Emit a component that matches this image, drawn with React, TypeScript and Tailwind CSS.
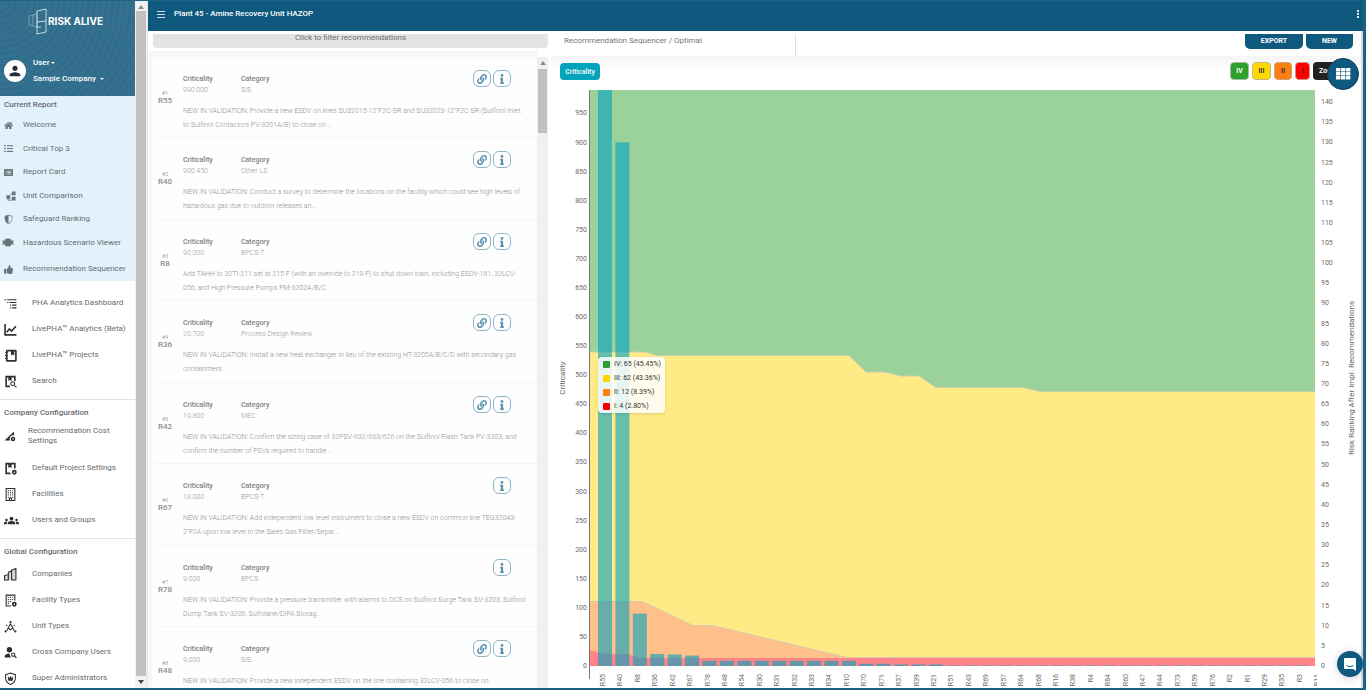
import type { ReactNode } from 'react';
import { BsShieldShaded } from 'react-icons/bs';
import { FaHome, FaInfo, FaLink, FaListUl, FaThumbsUp } from 'react-icons/fa';
import { FaRectangleList } from 'react-icons/fa6';
import { MdGroups, MdPerson } from 'react-icons/md';

type NavItem = { label: string; icon: ReactNode };

type Recommendation = {
  id: string;
  criticality: string;
  category: string;
  text: string;
  linked: boolean;
};

function LineIcon({ children }: { children: ReactNode }) {
  return (
    <svg
      viewBox="0 0 24 24"
      className="h-[13px] w-[13px]"
      fill="none"
      stroke="currentColor"
      strokeWidth="2"
    >
      {children}
    </svg>
  );
}

const reportItems: NavItem[] = [
  { label: 'Welcome', icon: <FaHome /> },
  { label: 'Critical Top 3', icon: <FaListUl /> },
  { label: 'Report Card', icon: <FaRectangleList /> },
  {
    label: 'Unit Comparison',
    icon: (
      <svg viewBox="0 0 24 24" className="ml-0.5 h-[10px] w-[10px]" fill="currentColor">
        <rect x="1" y="10" width="9" height="9" rx="1" />
        <rect x="14" y="1" width="9" height="9" rx="1" />
        <rect x="14" y="14" width="9" height="9" rx="1" />
        <path d="M5 18v4h9M9 11l5-5" fill="none" stroke="currentColor" strokeWidth="2" />
      </svg>
    ),
  },
  { label: 'Safeguard Ranking', icon: <BsShieldShaded /> },
  {
    label: 'Hazardous Scenario Viewer',
    icon: (
      <svg viewBox="0 0 24 18" className="-ml-0.5 h-[9px] w-[12px]" fill="currentColor">
        <ellipse cx="12" cy="9" rx="8" ry="8" />
        <path d="M0 4l6 3v4l-6 3 2-5zM24 4l-6 3v4l6 3-2-5z" />
      </svg>
    ),
  },
  { label: 'Recommendation Sequencer', icon: <FaThumbsUp /> },
];

const analyticsItems: NavItem[] = [
  {
    label: 'PHA Analytics Dashboard',
    icon: (
      <LineIcon>
        <path d="M1 5h3M6 5h17M6 10h2M10 10h13M11 15h2M15 15h8M11 20h2M15 20h8" />
      </LineIcon>
    ),
  },
  {
    label: 'LivePHA™ Analytics (Beta)',
    icon: (
      <LineIcon>
        <path d="M2 2v20h21M5 17l5-6 4 4 8-9" strokeWidth="3" />
      </LineIcon>
    ),
  },
  {
    label: 'LivePHA™ Projects',
    icon: (
      <LineIcon>
        <rect x="5" y="3" width="17" height="19" rx="1" strokeWidth="3" />
        <path d="M2 7h5M2 12h5M2 17h5" />
        <path d="M13 3h6v9l-3-2-3 2z" fill="currentColor" stroke="none" />
      </LineIcon>
    ),
  },
  {
    label: 'Search',
    icon: (
      <LineIcon>
        <path d="M11 21H4V3h16v8" strokeWidth="3" />
        <path d="M8 3h6v8l-3-2-3 2z" fill="currentColor" stroke="none" />
        <circle cx="16" cy="16" r="3.5" />
        <path d="M19 19l4 4" />
      </LineIcon>
    ),
  },
];

const companyItems: NavItem[] = [
  {
    label: 'Default Project Settings',
    icon: (
      <LineIcon>
        <path d="M12 21H4V3h16v9" strokeWidth="3" />
        <path d="M8 3h6v8l-3-2-3 2z" fill="currentColor" stroke="none" />
        <circle cx="19" cy="19" r="3" strokeWidth="3" />
      </LineIcon>
    ),
  },
  {
    label: 'Facilities',
    icon: (
      <LineIcon>
        <path d="M4 1h16v22H4zM10 23v-4h4v4" />
        <path d="M7 5h10M7 9h10M7 13h10M7 17h10" strokeDasharray="2 2" />
      </LineIcon>
    ),
  },
  { label: 'Users and Groups', icon: <MdGroups className="h-[15px] w-[15px]" /> },
];

const globalItems: NavItem[] = [
  {
    label: 'Companies',
    icon: (
      <LineIcon>
        <path d="M1 22V14l7-2v10zM8 22V8l6-3v17M14 22V4l8-3v21z" fill="#d5d8db" />
      </LineIcon>
    ),
  },
  {
    label: 'Facility Types',
    icon: (
      <LineIcon>
        <path d="M13 22H4V2h16v10" />
        <path d="M7 6h10M7 10h10M7 14h6M7 18h4" strokeDasharray="2 2" />
        <circle cx="19" cy="19" r="3" strokeWidth="3" />
      </LineIcon>
    ),
  },
  {
    label: 'Unit Types',
    icon: (
      <LineIcon>
        <path d="M12 7L5 20M12 7l7 13M8 15l4 3 4-3M4 9l2 2M20 9l-2 2" />
        <circle cx="12" cy="4" r="2" fill="currentColor" stroke="none" />
        <circle cx="3" cy="21" r="2" fill="currentColor" stroke="none" />
        <circle cx="21" cy="21" r="2" fill="currentColor" stroke="none" />
      </LineIcon>
    ),
  },
  {
    label: 'Cross Company Users',
    icon: (
      <LineIcon>
        <circle cx="10" cy="7" r="5" fill="currentColor" stroke="none" />
        <path d="M1 21c0-5 4-7 9-7 1 3 1 5 3 7z" fill="currentColor" stroke="none" />
        <circle cx="17" cy="16" r="3" />
        <path d="M19 18l4 4" />
      </LineIcon>
    ),
  },
  {
    label: 'Super Administrators',
    icon: (
      <LineIcon>
        <path d="M12 2l9 3v6c0 6-4 10-9 12-5-2-9-6-9-12V5z" />
        <path d="M7 8l3 3 2-4 2 4 3-3-1 8H8z" fill="currentColor" stroke="none" />
      </LineIcon>
    ),
  },
];

const recommendations: Recommendation[] = [
  {
    id: 'R55',
    criticality: '990.000',
    category: 'SIS',
    text: 'NEW IN VALIDATION: Provide a new ESDV on lines SU32015-12"F2C-SR and SU32023-12"F2C-SR (Sulfinol Inlet\nto Sulfinol Contactors PV-3201A/B) to close on ...',
    linked: true,
  },
  {
    id: 'R40',
    criticality: '900.450',
    category: 'Other LS',
    text: 'NEW IN VALIDATION: Conduct a survey to determine the locations on the facility which could see high levels of\nhazardous gas due to outdoor releases an...',
    linked: true,
  },
  {
    id: 'R8',
    criticality: '90.000',
    category: 'BPCS-T',
    text: 'Add TAHH to 32TI-211 set at 215 F (with an override to 219 F) to shut down train, including ESDV-161, 32LCV-\n056, and High Pressure Pumps PM-3202A/B/C.',
    linked: true,
  },
  {
    id: 'R36',
    criticality: '20.700',
    category: 'Process Design Review',
    text: 'NEW IN VALIDATION: Install a new heat exchanger in lieu of the existing HT-3205A/B/C/D with secondary gas\ncontainment.',
    linked: true,
  },
  {
    id: 'R42',
    criticality: '19.800',
    category: 'MEC',
    text: 'NEW IN VALIDATION: Confirm the sizing case of 32PSV-632/633/626 on the Sulfinol Flash Tank PV-3203, and\nconfirm the number of PSVs required to handle ...',
    linked: true,
  },
  {
    id: 'R67',
    criticality: '18.000',
    category: 'BPCS-T',
    text: 'NEW IN VALIDATION: Add independent low level instrument to close a new ESDV on common line TEG32043-\n2"F2A upon low level in the Sales Gas Filter/Separ...',
    linked: false,
  },
  {
    id: 'R78',
    criticality: '9.000',
    category: 'BPCS',
    text: 'NEW IN VALIDATION: Provide a pressure transmitter with alarms to DCS on Sulfinol Surge Tank SV-3203, Sulfinol\nDump Tank SV-3206, Sulfolane/DIPA Storag...',
    linked: false,
  },
  {
    id: 'R48',
    criticality: '9.000',
    category: 'SIS',
    text: 'NEW IN VALIDATION: Provide a new independent ESDV on the line containing 32LCV-056 to close on',
    linked: true,
  },
];

const chartLabels = [
  'R55', 'R40', 'R8', 'R36', 'R42', 'R67', 'R78', 'R48', 'R54', 'R30', 'R31', 'R32', 'R33', 'R34',
  'R10', 'R70', 'R71', 'R37', 'R39', 'R21', 'R51', 'R43', 'R69', 'R57', 'R64', 'R68', 'R16', 'R38',
  'R4', 'R84', 'R60', 'R47', 'R44', 'R73', 'R59', 'R76', 'R2', 'R1', 'R29', 'R35', 'R3', 'R11',
];

const chartValues = [
  990, 900.45, 90, 20.7, 19.8, 18, 9, 9, 9, 9, 9, 9, 9, 9, 9, 4, 4, 2.7, 2.7, 2.7, 1, 1, 1, 1, 1, 1,
  1, 1, 1, 1, 1, 1, 1, 1, 1, 1, 1, 1, 1, 1, 1,
];

const legend = [
  { label: 'IV: 65 (45.45%)', dot: 'bg-[#2ca02c]' },
  { label: 'III: 62 (43.36%)', dot: 'bg-[#ffd500]' },
  { label: 'II: 12 (8.39%)', dot: 'bg-[#ff7f0e]' },
  { label: 'I: 4 (2.80%)', dot: 'bg-[#f50000]' },
];

function NavRow({ item }: { item: NavItem }) {
  return (
    <li className="h-[26px]">
      <a href="#" className="flex h-full items-center pl-1">
        <span className="flex w-7 shrink-0 text-[#2b3035]">{item.icon}</span>
        <span className="whitespace-nowrap">{item.label}</span>
      </a>
    </li>
  );
}

function Logo() {
  return (
    <div className="flex items-center justify-center pr-1 pt-[6px]">
      <svg viewBox="0 0 22 28" className="-mr-0.5 h-7 w-[22px] shrink-0" fill="none" stroke="#fff">
        <path d="M9 4l9-2v12l-9 1zM9 15v12l9-2V14M9 20h4" strokeWidth="0.8" opacity="0.9" />
        <path d="M1 9l8-2M1 9v9l8 2M5 8v11M9 7v13" strokeWidth="1" opacity="0.3" />
      </svg>
      <span className="font-['Inter'] text-[10px] leading-3 font-bold whitespace-nowrap text-white">
        RISK ALIVE
      </span>
    </div>
  );
}

function Arrow({ down = false }: { down?: boolean }) {
  return (
    <svg viewBox="0 0 8 8" className="h-2 w-2 shrink-0" fill={down ? '#444' : '#8a8a8a'}>
      <path d={down ? 'M1 2h6L4 6z' : 'M1 6h6L4 2z'} />
    </svg>
  );
}

function Sidebar() {
  return (
    <aside className="w-[135px] shrink-0 overflow-hidden bg-white text-[8px] leading-[10px] text-[#666b70]">
      <div className="h-[95px] bg-[repeating-radial-gradient(circle_at_0_0,#34718f_0px,#34718f_3px,#2f6a89_4px,#34718f_6px)]">
        <Logo />
        <div className="flex items-center gap-[7px] pl-1 pt-[23px] text-white">
          <span className="flex h-[22px] w-[22px] items-center justify-center rounded-full bg-white text-[#222d38]">
            <MdPerson className="h-4 w-4" />
          </span>
          <div className="flex flex-col items-start gap-1.5 font-medium">
            <button type="button" className="flex items-center gap-0.5">
              User <span className="border-x-2 border-t-2 border-x-transparent border-t-white" />
            </button>
            <button type="button" className="flex items-center gap-1">
              Sample Company
              <span className="border-x-2 border-t-2 border-x-transparent border-t-white" />
            </button>
          </div>
        </div>
      </div>

      <nav className="bg-[#e2f2fc]">
        <h2 className="flex h-[17px] items-center pl-1 font-medium">Current Report</h2>
        <ul>
          {reportItems.map((item) => (
            <li key={item.label} className="odd:h-6 even:h-[23px] last:pt-[3px] last:box-content">
              <a href="#" className="flex h-full items-center pl-1">
                <span className="flex w-[19px] shrink-0 text-[9px] text-[#6b7278]">{item.icon}</span>
                <span className="whitespace-nowrap">{item.label}</span>
              </a>
            </li>
          ))}
        </ul>
      </nav>

      <ul className="border-b border-[#e4e4e4] pt-[9px] pb-[5px]">
        {analyticsItems.map((item) => (
          <NavRow key={item.label} item={item} />
        ))}
      </ul>

      <section className="border-b border-[#e4e4e4] pb-[5px]">
        <h2 className="flex h-[22px] items-center pt-[3px] pl-1 font-medium">Company Configuration</h2>
        <ul>
          <li className="mb-[5px] h-7">
            <a href="#" className="flex h-full items-center pl-1">
              <span className="flex w-6 shrink-0 text-[#2b3035]">
                <svg viewBox="0 0 24 24" className="h-3 w-3" fill="currentColor">
                  <path d="M1 21L20 3v8a7 7 0 0 0-8 10z" />
                  <circle cx="18" cy="18" r="3" fill="none" stroke="currentColor" strokeWidth="3" />
                </svg>
              </span>
              <span>Recommendation Cost Settings</span>
            </a>
          </li>
          {companyItems.map((item) => (
            <NavRow key={item.label} item={item} />
          ))}
        </ul>
      </section>

      <section>
        <h2 className="flex h-[22px] items-center pt-[3px] pl-1 font-medium">Global Configuration</h2>
        <ul>
          {globalItems.map((item) => (
            <NavRow key={item.label} item={item} />
          ))}
        </ul>
      </section>
    </aside>
  );
}

function RecommendationRow({ rec, index }: { rec: Recommendation; index: number }) {
  return (
    <li className="flex shrink-0 gap-2 border-b border-[#f5f5f5] pt-[17px] odd:h-[81px] even:h-[82px]">
      <div className="w-5 shrink-0 pt-4 text-center">
        <div className="text-[5px] leading-[6px] text-[#a0a0a0]">#{index + 1}</div>
        <div className="text-[8px] leading-[9px] font-medium text-[#8c8c8c]">{rec.id}</div>
      </div>
      <div className="min-w-0 flex-1 text-[7px] leading-[11px] text-[#999]">
        <div className="flex">
          <dl className="w-[58px]">
            <dt className="font-medium text-[#808080]">Criticality</dt>
            <dd className="font-light">{rec.criticality}</dd>
          </dl>
          <dl className="flex-1">
            <dt className="font-medium text-[#808080]">Category</dt>
            <dd className="font-light">{rec.category}</dd>
          </dl>
          <div className="-mt-1 mr-[26px] flex gap-0.5 text-[#5a93b0]">
            {rec.linked && (
              <button
                type="button"
                aria-label="Linked scenarios"
                className="flex h-[17px] w-[18px] items-center justify-center rounded-[6px] border border-[#8fb5c9]"
              >
                <FaLink className="h-[10px] w-[10px]" />
              </button>
            )}
            <button
              type="button"
              aria-label="Details"
              className="flex h-[17px] w-[18px] items-center justify-center rounded-[6px] border border-[#8fb5c9]"
            >
              <FaInfo className="h-[10px] w-[10px]" />
            </button>
          </div>
        </div>
        <p className="mt-2 text-[7px] leading-[14px] font-light whitespace-pre text-[#8e8e8e]">{rec.text}</p>
      </div>
    </li>
  );
}

function RecommendationList() {
  return (
    <section className="flex w-[403px] shrink-0 flex-col">
      <div className="bg-white py-[3px] pr-[3px] pl-[5px]">
        <button
          type="button"
          className="flex h-[14px] w-full justify-center rounded-b bg-[#e3e3e3] text-[8px] leading-[8px] text-[#6c6c6c]"
        >
          Click to filter recommendations
        </button>
      </div>
      <div className="flex min-h-0 flex-1 border-l-4 border-[#f7f7f7] bg-[#fefefe] pr-[3px]">
        <div className="min-w-0 flex-1 overflow-hidden bg-[linear-gradient(#f3f3f3,#fefefe_10px)]">
          <ul className="flex flex-col pt-1.5 pl-[3px]">
            {recommendations.map((rec, i) => (
              <RecommendationRow key={rec.id} rec={rec} index={i} />
            ))}
          </ul>
        </div>
        <div className="mt-[6px] flex w-[11px] flex-col items-center bg-[#f0f0f0] pt-0.5">
          <Arrow />
          <div className="mt-0.5 h-16 w-[9px] bg-[#c1c1c1]" />
        </div>
      </div>
    </section>
  );
}

function SequencerChart() {
  // left and bottom edges of the plot, and its scales
  const left = 38;
  const right = 764;
  const bottom = 582;
  const step = 17.42;
  const critY = (v: number) => bottom - v * 0.5816;
  const rankY = (v: number) => bottom - v * 4.028;

  return (
    <svg viewBox="0 0 810 604" className="block w-full font-['Roboto']">
      <defs>
        {/* the last tick label runs past the plot and is cut off */}
        <clipPath id="tick-clip">
          <rect x="0" y="0" width="766" height="604" />
        </clipPath>
      </defs>

      <rect x={left} y="6" width={right - left} height={bottom - 6} fill="#9bd299" />
      <path
        d={`M${left} 268H94L106 271.5H298L315 288H333L350 292H368L385 303.5H472L489 307.5H${right}V${bottom}H${left}Z`}
        fill="#ffea85"
      />
      <path
        d={`M${left} 268H94L106 271.5H298L315 288H333L350 292H368L385 303.5H472L489 307.5H${right}`}
        fill="none"
        stroke="#c9cfae"
      />
      <path d={`M${left} 517.5H91L142 541.5H161L296 573.5H${right}V${bottom}H${left}Z`} fill="#ffc089" />
      <path d={`M${left} 517.5H91L142 541.5H161L296 573.5H${right}`} fill="none" stroke="#d8c8b0" />
      <path d={`M${left} 566L54 570H76L90 574H${right}V${bottom}H${left}Z`} fill="#ff8487" />

      {chartValues.map((value, i) => (
        <rect
          key={i}
          x={47 + i * step}
          y={critY(value)}
          width="14"
          height={value * 0.5816}
          fill="#02a2c1"
          fillOpacity="0.6"
        />
      ))}

      <path d={`M${left + 0.5} 6V595`} stroke="#777" />

      {Array.from({ length: 20 }, (_, i) => i * 50).map((v) => (
        <text key={v} x="36" y={critY(v) + 2} textAnchor="end" fontSize="7" fill="#6a6a6a">
          {v}
        </text>
      ))}
      {Array.from({ length: 29 }, (_, i) => i * 5).map((v) => (
        <text key={v} x="770" y={rankY(v) + 2} fontSize="7" fill="#6a6a6a">
          {v}
        </text>
      ))}
      <g clipPath="url(#tick-clip)">
        {chartLabels.map((label, i) => (
          <text
            key={label}
            transform={`translate(${54 + i * step}, 590) rotate(-90)`}
            textAnchor="end"
            fontSize="7"
            fill="#6a6a6a"
          >
            {label}
          </text>
        ))}
      </g>

      <text transform="translate(14, 294) rotate(-90)" textAnchor="middle" fontSize="8" fill="#666">
        Criticality
      </text>
      <text transform="translate(803, 294) rotate(-90)" textAnchor="middle" fontSize="8" fill="#666">
        Risk Ranking After Impl. Recommendations
      </text>
    </svg>
  );
}

function SequencerPanel() {
  return (
    <section className="flex min-w-0 flex-1 flex-col border-r-2 border-[#dcdcdc] bg-white">
      <div className="flex h-[25px] shrink-0 justify-between pt-[3px] pr-2 pl-[13px]">
        <div className="w-[232px] border-r border-[#dedede] pt-0.5 text-[8px] leading-[10px] text-[#757575]">
          Recommendation Sequencer / Optimal
        </div>
        <div className="flex h-[15px] gap-[3px] text-[7px] leading-[12px] font-bold text-white">
          <button type="button" className="flex w-[58px] justify-center rounded-b-[5px] bg-[#0f587e] pt-px">
            EXPORT
          </button>
          <button type="button" className="flex w-[47px] justify-center rounded-b-[5px] bg-[#0f587e] pt-px">
            NEW
          </button>
        </div>
      </div>

      <div className="flex h-[28px] shrink-0 items-start justify-between bg-[linear-gradient(#f5f5f5,#fff_14px)] pt-1.5 pr-3 pl-[9px]">
        <button
          type="button"
          className="mt-px h-[17px] w-10 rounded-[4px] bg-[#05a3bc] text-[7px] leading-[10px] font-medium text-white"
        >
          Criticality
        </button>
        <div className="flex gap-[3px] text-[7px] leading-[10px] font-bold text-[#333]">
          <button type="button" className="h-[18px] w-[19px] rounded-[4px] border border-[#a9b8a0] bg-[#2ca02c] text-white">
            IV
          </button>
          <button type="button" className="h-[18px] w-[19px] rounded-[4px] border border-[#c5b880] bg-[#ffd800]">
            III
          </button>
          <button type="button" className="h-[18px] w-[18px] rounded-[4px] border border-[#c9a27e] bg-[#ff7f0e]">
            II
          </button>
          <button type="button" className="h-[18px] w-[15px] rounded-[4px] border border-[#d09090] bg-[#ff0000]">
            I
          </button>
          <button type="button" className="h-[18px] w-9 rounded-[4px] bg-[#222] pl-1.5 text-left text-white">
            Zoom
          </button>
        </div>
      </div>

      <div className="relative">
        <SequencerChart />
        <ul className="absolute top-[273px] left-[47px] flex flex-col gap-1 rounded-[4px] bg-white/85 py-0.5 pr-1 pl-[5px] text-[7px] leading-[10px] text-[#333] shadow">
          {legend.map((item) => (
            <li key={item.label} className="flex items-center gap-1">
              <span className={`h-[7px] w-[7px] rounded-[1px] ${item.dot}`} />
              {item.label}
            </li>
          ))}
        </ul>
      </div>
    </section>
  );
}

export default function App() {
  return (
    <div className="relative flex h-screen overflow-hidden border-t border-r-[3px] border-b-2 border-[#1b6287] bg-white font-['Roboto',sans-serif]">
      <Sidebar />
      <div className="flex w-[13px] shrink-0 flex-col items-center justify-between border-r border-[#e6e6e6] bg-[#f1f1f1] py-0.5">
        <Arrow />
        <div className="mb-0.5 w-[10px] flex-1 bg-[#c1c1c1]" />
        <Arrow down />
      </div>

      <main className="flex min-w-0 flex-1 flex-col">
        <header className="flex h-[30px] shrink-0 items-center bg-[#0f587e] pr-0.5 pb-1 pl-2 text-white">
          <button type="button" aria-label="Menu" className="mr-2">
            <svg viewBox="0 0 10 10" className="h-[10px] w-[10px]" stroke="#fff">
              <path d="M1 2.5h8M1 5.5h8M1 8.5h8" strokeWidth="0.8" />
            </svg>
          </button>
          <h1 className="flex-1 text-[8px] leading-[10px] font-medium">Plant 45 - Amine Recovery Unit HAZOP</h1>
          <button type="button" aria-label="More options">
            <svg viewBox="0 0 6 10" className="h-[10px] w-[6px]" fill="#dfe9ee">
              <path d="M2 1h2v2H2zM2 4h2v2H2zM2 7h2v2H2z" />
            </svg>
          </button>
        </header>
        <div className="flex min-h-0 flex-1">
          <RecommendationList />
          <SequencerPanel />
        </div>
      </main>

      <button
        type="button"
        aria-label="Apps"
        className="absolute top-[57px] right-1 flex h-8 w-8 items-center justify-center rounded-full border border-[#163a50] bg-[#0f587e] text-white"
      >
        <svg viewBox="0 0 15 12" className="h-3 w-[15px]" fill="currentColor">
          {[0, 5, 10].map((x) =>
            [0, 4, 8].map((y) => <rect key={`${x}-${y}`} x={x} y={y} width="4.4" height="3.4" rx="0.5" />)
          )}
        </svg>
      </button>
      <button
        type="button"
        aria-label="Open chat"
        className="absolute right-0 bottom-[11px] flex h-[26px] w-[26px] items-center justify-center rounded-full bg-[#0f587e] shadow-[0_1px_8px_rgba(0,0,0,0.2)]"
      >
        <svg viewBox="0 0 14 15" className="h-[15px] w-[14px]">
          <path d="M2 1h10a1 1 0 0 1 1 1v12l-3-2H2a1 1 0 0 1-1-1V2a1 1 0 0 1 1-1z" fill="#fff" />
          <path d="M3.5 8.5q3.5 2.5 7 0" fill="none" stroke="#0f587e" />
        </svg>
      </button>
    </div>
  );
}
